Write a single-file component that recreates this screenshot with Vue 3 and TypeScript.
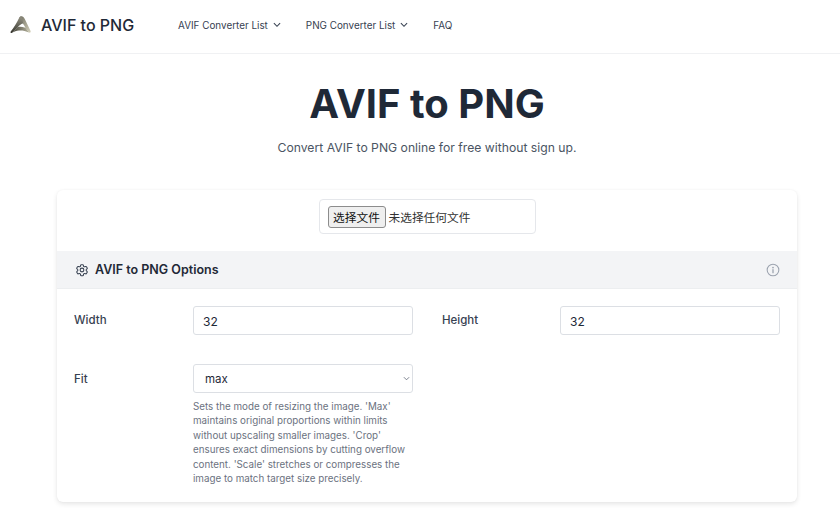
<script setup lang="ts">
const navItems: { label: string; caret: boolean }[] = [
  { label: 'AVIF Converter List', caret: true },
  { label: 'PNG Converter List', caret: true },
  { label: 'FAQ', caret: false },
]
</script>

<template>
  <div class="page">
    <header class="nav">
      <a class="brand">
        <svg class="logo" width="22" height="18" viewBox="0 0 22 18">
          <defs>
            <linearGradient id="lgl" x1="0.2" y1="0" x2="0" y2="1">
              <stop offset="0" stop-color="#8a887a" />
              <stop offset="1" stop-color="#33332c" />
            </linearGradient>
            <linearGradient id="lgr" x1="0" y1="0" x2="1" y2="1">
              <stop offset="0" stop-color="#6f6d60" />
              <stop offset="1" stop-color="#d6d3bd" />
            </linearGradient>
            <linearGradient id="lgb" x1="0" y1="0" x2="1" y2="0">
              <stop offset="0" stop-color="#3d3d34" />
              <stop offset="1" stop-color="#b5b29c" />
            </linearGradient>
          </defs>
          <path fill="url(#lgr)" d="M11.500 .3 C13 .3 14 1.500 14.800 3 L20.600 15 C21 16.200 20.200 17 19 16.600 L15.500 12 C14.800 10.400 13.800 8.600 12.800 7.600 L9 3 C9.500 1 10.400 .3 11.500 .3 Z" />
          <path fill="url(#lgl)" d="M9.300 1.500 C9.800 .7 10.600 .3 11.500 .3 L13.200 7.200 C10.800 8.200 9 9.600 7.800 11.200 L1.800 17 C.8 17.400 .2 16.600 .7 15.600 C3.500 12 6.500 7.500 9.300 1.500 Z" />
          <path fill="url(#lgb)" d="M7.800 11 C10 10.600 12.500 10.800 15.400 11.800 L19 16.600 C15.500 15 12.500 14.400 9 14.600 C6.500 14.800 4 15.600 1.800 17 Z" />
        </svg>
        <span class="brand-text">AVIF to PNG</span>
      </a>
      <nav class="links">
        <a v-for="item in navItems" :key="item.label" class="link">
          {{ item.label }}
          <svg v-if="item.caret" class="caret" width="8" height="6" viewBox="0 0 9 6" fill="none" stroke="#374151" stroke-width="1.200"><path d="M1 1l3.500 3.500L8 1" /></svg>
        </a>
      </nav>
    </header>

    <section class="hero">
      <h1>AVIF to PNG</h1>
      <p>Convert AVIF to PNG online for free without sign up.</p>
    </section>

    <section class="card">
      <div class="file-row">
        <div class="file-box">
          <button class="file-btn" type="button">选择文件</button>
          <span class="file-text">未选择任何文件</span>
        </div>
      </div>
      <div class="opt-head">
        <div class="opt-title">
          <svg width="14" height="14" viewBox="0 0 24 24" fill="none" stroke="#374151" stroke-width="1.800" stroke-linecap="round" stroke-linejoin="round">
            <path d="M9.600 3.900c.1-.6.600-1 1.200-1h2.400c.6 0 1.100.4 1.200 1l.2 1.300c.1.400.4.700.7.900l.5.300c.3.200.8.200 1.100.100l1.300-.5c.5-.2 1.200 0 1.500.5l1.200 2.100c.3.500.2 1.200-.3 1.500l-1 .9c-.3.200-.5.600-.5 1v.6c0 .4.200.8.500 1l1 .9c.5.300.6 1 .3 1.500l-1.200 2.100c-.3.500-1 .7-1.500.5l-1.300-.5c-.3-.1-.8-.1-1.100.1l-.5.300c-.3.200-.6.500-.7.900l-.2 1.300c-.1.600-.6 1-1.200 1h-2.400c-.6 0-1.100-.4-1.200-1l-.2-1.300c-.1-.4-.4-.7-.7-.9l-.5-.3c-.3-.2-.8-.2-1.100-.1l-1.300.5c-.5.2-1.200 0-1.500-.5l-1.200-2.100c-.3-.5-.2-1.200.3-1.500l1-.9c.3-.2.5-.6.5-1v-.6c0-.4-.2-.8-.5-1l-1-.9c-.5-.3-.6-1-.3-1.500l1.200-2.100c.3-.5 1-.7 1.500-.5l1.300.5c.3.100.8.100 1.100-.1l.5-.3c.3-.2.6-.5.7-.9z" />
            <circle cx="12" cy="12" r="3.200" />
          </svg>
          <span>AVIF to PNG Options</span>
        </div>
        <svg class="info" width="14" height="14" viewBox="0 0 24 24" fill="none" stroke="#9ca3af" stroke-width="1.800" stroke-linecap="round">
          <circle cx="12" cy="12" r="10" />
          <path d="M12 11.500v5" stroke-width="2.200" />
          <circle cx="12" cy="7.800" r=".6" fill="#9ca3af" />
        </svg>
      </div>
      <div class="form">
        <label class="lbl">Width</label>
        <input class="ctl" type="text" value="32" />
        <label class="lbl">Height</label>
        <input class="ctl" type="text" value="32" />
        <label class="lbl fit">Fit</label>
        <div class="fit-col">
          <div class="sel">
            <span>max</span>
            <svg width="7" height="5" viewBox="0 0 8 5" fill="none" stroke="#6b7280" stroke-width="1"><path d="M1 1l3 3 3-3" /></svg>
          </div>
          <p class="help">Sets the mode of resizing the image. 'Max' maintains original proportions within limits without upscaling smaller images. 'Crop' ensures exact dimensions by cutting overflow content. 'Scale' stretches or compresses the image to match target size precisely.</p>
        </div>
      </div>
    </section>
  </div>
</template>

<style>
html, body { margin: 0; background: #fff; overflow: hidden; }
</style>

<style scoped>
.page {
  width: 840px;
  height: 528px;
  overflow: hidden;
  font-family: Inter, "Noto Sans CJK SC", sans-serif;
  color: #1f2937;
}
.nav {
  height: 50px;
  padding: 0 0 3px 10px;
  border-bottom: 1px solid #f0f1f3;
  display: flex;
  align-items: center;
}
.brand { display: flex; align-items: center; width: 168px; }
.logo { margin-right: 9px; }
.brand-text { font-size: 16px; font-weight: 500; color: #1f2937; }
.links { display: flex; gap: 25px; }
.link { display: flex; align-items: center; gap: 5px; font-size: 9.900px; color: #374151; font-weight: 400; }
.hero { text-align: center; padding-top: 26px; margin-left: 14px; }
h1 { margin: 0; font-size: 40px; line-height: 48px; font-weight: 700; color: #1f2937; }
.hero p { margin: 10px 0 0; font-size: 12.200px; line-height: 20px; color: #4b5563; }
.card {
  margin: 32px 43px 0 57px;
  height: 312px;
  border-radius: 6px;
  background: #fff;
  box-shadow: 0 2px 5px rgba(0,0,0,.1), 0 0 2px rgba(0,0,0,.04);
}
.file-row { height: 61px; display: flex; justify-content: center; align-items: flex-start; padding-top: 9px; box-sizing: border-box; }
.file-box {
  width: 217px; height: 35px; box-sizing: border-box;
  border: 1px solid #e5e7eb; border-radius: 4px;
  display: flex; align-items: center; padding-left: 8px; gap: 3px;
}
.file-btn {
  height: 22px; width: 58px; padding: 0;
  border: 1px solid #8c8c8c; border-radius: 3px; background: #efefef;
  font: 11.700px "Noto Sans CJK SC", sans-serif; color: #111;
}
.file-text { font: 11.700px "Noto Sans CJK SC", sans-serif; color: #333; }
.opt-head {
  height: 38px; box-sizing: border-box; background: #f3f4f6;
  border-bottom: 1px solid #eceef0;
  display: flex; align-items: center; justify-content: space-between;
  padding: 0 17px 0 18px;
}
.opt-title { display: flex; align-items: center; gap: 6px; font-size: 12.500px; font-weight: 600; color: #1f2937; }
.form {
  display: grid;
  grid-template-columns: 119px 220px 118px 220px;
  padding: 17px 17px 0 17px;
  grid-template-rows: 29px auto;
  row-gap: 29px;
}
.lbl { font-size: 11.500px; color: #374151; font-weight: 500; padding-top: 7px; }
.lbl:nth-of-type(2) { margin-left: 29px; }
.ctl {
  box-sizing: border-box; width: 220px; height: 29px;
  border: 1px solid #dcdfe4; border-radius: 3px; padding: 1px 9px 0;
  font: 12px Inter, sans-serif; color: #1f2937; outline: none;
}
.form > .ctl:nth-of-type(2) { margin-left: 29px; }
.fit { padding-top: 8px; }
.fit-col { grid-column: 2 / span 1; width: 220px; }
.sel {
  box-sizing: border-box; height: 29px;
  border: 1px solid #dcdfe4; border-radius: 3px;
  display: flex; align-items: center; justify-content: space-between;
  padding: 0 2px 0 11px; font-size: 11.500px; color: #1f2937;
}
.help { margin: 7px 0 0; font-size: 9.800px; line-height: 14.400px; color: #6b7280; }
</style>
